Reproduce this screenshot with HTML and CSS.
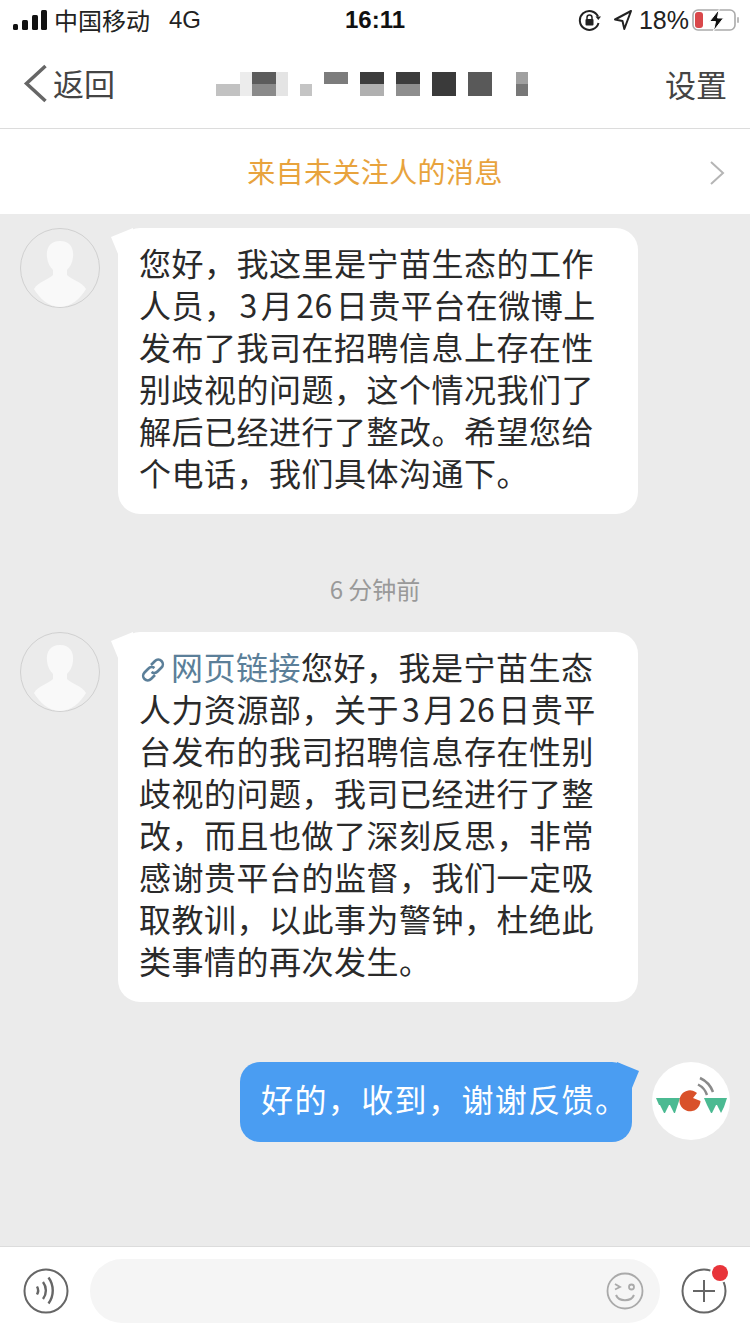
FILE: index.html
```html
<!DOCTYPE html>
<html lang="zh">

<head>
    <meta charset="UTF-8">
    <meta name="viewport" content="width=device-width, initial-scale=1.0">
    <title>私信</title>
    <link rel="stylesheet" href="styles.css">
</head>

<body>
    <div class="page">
        <div class="status-bar">
            <div class="status-left">
                <svg class="signal" width="34" height="22" viewBox="0 0 34 22">
                    <rect x="0" y="15" width="5" height="6" rx="1.5" fill="#111" />
                    <rect x="9" y="11" width="6" height="10" rx="1.5" fill="#111" />
                    <rect x="19" y="6" width="6" height="15" rx="1.5" fill="#111" />
                    <rect x="28" y="1" width="6" height="20" rx="1.5" fill="#111" />
                </svg>
                <span class="carrier">中国移动</span>
                <span class="network">4G</span>
            </div>
            <div class="status-time">16:11</div>
            <div class="status-right">
                <svg width="24" height="24" viewBox="0 0 24 24">
                    <path d="M20 8.5A9.5 9.5 0 1 0 20.5 15" fill="none" stroke="#222" stroke-width="2" />
                    <path d="M17.5 8.5h5.5l-2.7 3.5z" fill="#222" />
                    <rect x="7.5" y="11" width="8" height="6.5" rx="1" fill="#222" />
                    <path d="M9 11V9.5a2.5 2.5 0 0 1 5 0V11" fill="none" stroke="#222" stroke-width="1.5" />
                </svg>
                <svg class="arrow" width="20" height="22" viewBox="0 0 20 22">
                    <path d="M18 2 2 10.5l7.5 1.5 1.8 8z" fill="none" stroke="#222" stroke-width="2" stroke-linejoin="round" />
                </svg>
                <span class="battery-text">18%</span>
                <svg width="48" height="24" viewBox="0 0 48 24">
                    <rect x="1" y="2" width="42" height="20" rx="5" fill="none" stroke="#aaa" stroke-width="1.6" />
                    <rect x="3" y="4" width="8" height="16" rx="3" fill="#d9474a" />
                    <path d="M27 1.5 17.500 13.500h6l-2 9.500 10-13h-6z" fill="#111" stroke="#fff" stroke-width="1" />
                    <rect x="45" y="9" width="2" height="6" rx="1" fill="#bbb" />
                </svg>
            </div>
        </div>

        <div class="nav-bar">
            <div class="nav-back">
                <svg width="26" height="40" viewBox="0 0 26 40">
                    <path d="M22.500 2 3.500 19.500 22.500 37" fill="none" stroke="#666" stroke-width="3.500" />
                </svg>
                <span>返回</span>
            </div>
            <svg class="nav-title" width="312" height="24" viewBox="0 0 312 24">
                <rect x="0" y="12" width="24" height="12" fill="#c2c2c2" />
                <rect x="24" y="0" width="12" height="24" fill="#ececec" />
                <rect x="36" y="0" width="24" height="12" fill="#5c5c5c" />
                <rect x="36" y="12" width="24" height="12" fill="#8a8a8a" />
                <rect x="60" y="0" width="12" height="24" fill="#e4e4e4" />
                <rect x="84" y="12" width="12" height="12" fill="#c4c4c4" />
                <rect x="108" y="0" width="24" height="12" fill="#7c7c7c" />
                <rect x="144" y="0" width="24" height="12" fill="#3c3c3c" />
                <rect x="144" y="12" width="24" height="12" fill="#b0b0b0" />
                <rect x="180" y="0" width="24" height="12" fill="#3c3c3c" />
                <rect x="180" y="12" width="24" height="12" fill="#8e8e8e" />
                <rect x="216" y="0" width="24" height="24" fill="#3a3a3a" />
                <rect x="252" y="0" width="24" height="24" fill="#595959" />
                <rect x="300" y="0" width="12" height="12" fill="#a0a0a0" />
                <rect x="300" y="12" width="12" height="12" fill="#777" />
            </svg>
            <div class="nav-action">设置</div>
        </div>

        <div class="notice">
            <span>来自未关注人的消息</span>
            <svg class="notice-arrow" width="16" height="26" viewBox="0 0 16 26">
                <path d="M2 2 14 13 2 24" fill="none" stroke="#b5b5b5" stroke-width="2" />
            </svg>
        </div>

        <div class="chat">
            <div class="msg">
                <svg class="avatar" width="80" height="80" viewBox="0 0 80 80">
                    <circle cx="40" cy="40" r="39.500" fill="#ebebeb" stroke="#d0d0d0" stroke-width="1" />
                    <path d="M40 13c-10 0-14 7-13 16 .6 6 3 10 6 13v5c-5 5-15 7-19 14 5 9 15 18 26 18s21-9 26-18c-4-7-14-9-19-14v-5c3-3 5.400-7 6-13 1-9-3-16-13-16z" fill="#f9f9f9" />
                </svg>
                <div class="bubble">您好，我这里是宁苗生态的工作<br>人员，<span class="num">3</span>月<span class="num">26</span>日贵平台在微博上<br>发布了我司在招聘信息上存在性<br>别歧视的问题，这个情况我们了<br>解后已经进行了整改。希望您给<br>个电话，我们具体沟通下。</div>
            </div>

            <div class="chat-time">6 分钟前</div>

            <div class="msg">
                <svg class="avatar" width="80" height="80" viewBox="0 0 80 80">
                    <circle cx="40" cy="40" r="39.500" fill="#ebebeb" stroke="#d0d0d0" stroke-width="1" />
                    <path d="M40 13c-10 0-14 7-13 16 .6 6 3 10 6 13v5c-5 5-15 7-19 14 5 9 15 18 26 18s21-9 26-18c-4-7-14-9-19-14v-5c3-3 5.400-7 6-13 1-9-3-16-13-16z" fill="#f9f9f9" />
                </svg>
                <div class="bubble"><svg class="link-icon" width="28" height="28" viewBox="0 0 28 28">
                        <path d="M12 9l4-4a4.500 4.500 0 0 1 6.500 6.500l-4 4a4.500 4.500 0 0 1-6 .5M16 19l-4 4a4.500 4.500 0 0 1-6.500-6.500l4-4a4.500 4.500 0 0 1 6-.5" fill="none" stroke="#5b7f99" stroke-width="2.600" />
                    </svg><span class="link-text">网页链接</span>您好，我是宁苗生态<br>人力资源部，关于<span class="num">3</span>月<span class="num">26</span>日贵平<br>台发布的我司招聘信息存在性别<br>歧视的问题，我司已经进行了整<br>改，而且也做了深刻反思，非常<br>感谢贵平台的监督，我们一定吸<br>取教训，以此事为警钟，杜绝此<br>类事情的再次发生。</div>
            </div>

            <div class="msg msg-self">
                <div class="bubble bubble-self">好的，收到，谢谢反馈。</div>
                <svg class="avatar-self" width="78" height="78" viewBox="0 0 78 78">
                    <circle cx="39" cy="39" r="39" fill="#fff" />
                    <path d="M4 36h24l-5 15h-1l-4-8h-1l-4 8h-1l-4-8h-1zM52 36h23l-3 9-3 6-4-8h-1l-4 8h-1l-4-8z" fill="#4bba92" />
                    <path d="M45 31A10.500 10.500 0 1 0 48.500 39L41 36z" fill="#d9512a" />
                    <path d="M46 22.500A18 18 0 0 1 55 33M48 16A25 25 0 0 1 61 30" fill="none" stroke="#8a8a8a" stroke-width="2.500" />
                </svg>
            </div>
        </div>

        <div class="input-bar">
            <svg width="46" height="46" viewBox="0 0 46 46">
                <circle cx="23" cy="23" r="21.500" fill="none" stroke="#666" stroke-width="2" />
                <path d="M14 18.500a8 8 0 0 1 0 8M20 14a14 14 0 0 1 0 17M25.500 9.500a22 22 0 0 1 0 26" fill="none" stroke="#666" stroke-width="2.400" />
            </svg>
            <div class="input-box">
                <svg width="38" height="38" viewBox="0 0 38 38">
                    <circle cx="19" cy="19" r="17.500" fill="none" stroke="#aaa" stroke-width="1.800" />
                    <path d="M9 12l5 3-5 2.500" fill="none" stroke="#aaa" stroke-width="1.800" />
                    <circle cx="25.500" cy="15" r="2.500" fill="none" stroke="#aaa" stroke-width="1.800" />
                    <path d="M10 23c3 7 15 7 18 0" fill="none" stroke="#aaa" stroke-width="2" />
                </svg>
            </div>
            <div class="plus-btn">
                <svg width="46" height="46" viewBox="0 0 46 46">
                    <circle cx="23" cy="23" r="21.500" fill="none" stroke="#666" stroke-width="2" />
                    <path d="M23 12v22M12 23h22" stroke="#666" stroke-width="2" />
                </svg>
                <span class="red-dot"></span>
            </div>
        </div>
    </div>
</body>

</html>
```

FILE: styles.css
```css
body {
    margin: 0;
    padding: 0;
    font-family: "Noto Sans CJK SC", "Liberation Sans", sans-serif;
    color: #222;
    background-color: #ebebeb;
}

svg {
    display: block;
    flex-shrink: 0;
}

.page {
    display: flex;
    flex-direction: column;
    width: 750px;
    height: 1334px;
    overflow: hidden;
}

.status-bar {
    display: flex;
    align-items: center;
    justify-content: space-between;
    height: 40px;
    padding: 0 13px;
    background-color: #fff;
    position: relative;
}

.status-left {
    display: flex;
    align-items: center;
    gap: 7px;
    font-size: 24px;
    line-height: 38px;
}

.network {
    margin-left: 12px;
    font-family: "Liberation Sans", sans-serif;
}

.status-time {
    position: absolute;
    left: 0;
    right: 0;
    text-align: center;
    font-family: "Liberation Sans", sans-serif;
    font-size: 24px;
    font-weight: bold;
    line-height: 40px;
    color: #111;
}

.status-right {
    display: flex;
    align-items: center;
    gap: 3px;
    margin-right: -3px;
    position: relative;
}

.arrow {
    margin-left: 8px;
}

.battery-text {
    margin-left: 3px;
    font-family: "Liberation Sans", sans-serif;
    font-size: 25px;
    line-height: 40px;
}

.nav-bar {
    display: flex;
    align-items: center;
    justify-content: space-between;
    height: 88px;
    padding: 0 23px;
    background-color: #fff;
    border-bottom: 1px solid #dcdcdc;
    color: #444;
    font-size: 31px;
}

.nav-back {
    display: flex;
    align-items: center;
    gap: 4px;
    line-height: 40px;
}

.nav-back span {
    margin-top: -2px;
}

.nav-title {
    margin: 0 36px 0 0;
}

.nav-action {
    line-height: 40px;
}

.notice {
    display: flex;
    align-items: center;
    justify-content: center;
    height: 83px;
    padding-bottom: 2px;
    background-color: #fff;
    color: #e8a33d;
    font-size: 28px;
    letter-spacing: 0.4px;
    position: relative;
}

.notice-arrow {
    position: absolute;
    right: 25px;
    top: 31px;
}

.chat {
    flex: 1;
    display: flex;
    flex-direction: column;
    padding-top: 14px;
    background-color: #ebebeb;
}

.msg {
    display: flex;
    align-items: flex-start;
    gap: 18px;
    padding-left: 20px;
}

.msg-self {
    justify-content: flex-end;
    gap: 20px;
    margin-top: 60px;
    padding-right: 20px;
}

.bubble {
    position: relative;
    padding: 13px 21px 21px;
    width: 478px;
    background-color: #fff;
    border-radius: 22px;
    font-size: 32px;
    line-height: 42px;
    letter-spacing: 0.5px;
    color: #2a2a2a;
    white-space: nowrap;
}

/* tail on the top corner */
.bubble::before {
    content: "";
    position: absolute;
    top: 0;
    left: -7px;
    width: 22px;
    height: 26px;
    background-color: #fff;
    clip-path: polygon(0 35%, 100% 0, 100% 100%, 32% 100%);
}

.bubble-self {
    width: 350px;
    height: 80px;
    padding: 0 21px;
    line-height: 72px;
    letter-spacing: 1.4px;
    background-color: #4a9df2;
    color: #fff;
    border-radius: 20px;
}

.bubble-self::before {
    left: auto;
    right: -7px;
    background-color: #4a9df2;
    clip-path: polygon(100% 35%, 0 0, 0 100%, 68% 100%);
}

.num {
    margin: 0 3px;
}

.chat-time {
    margin: 57px 0 25px;
    text-align: center;
    font-size: 24px;
    line-height: 36px;
    color: #999;
}

.link-icon {
    display: inline-block;
    vertical-align: -4px;
    margin-right: 4px;
}

.link-text {
    color: #5b7f99;
}

.input-bar {
    display: flex;
    align-items: center;
    height: 87px;
    padding: 0 23px;
    gap: 21px;
    background-color: #fff;
    border-top: 1px solid #dcdcdc;
}

.input-box {
    display: flex;
    align-items: center;
    justify-content: flex-end;
    width: 570px;
    height: 64px;
    padding-right: 16px;
    box-sizing: border-box;
    background-color: #f5f5f5;
    border-radius: 32px;
}

.plus-btn {
    position: relative;
}

.red-dot {
    position: absolute;
    top: -3px;
    right: -1px;
    width: 16px;
    height: 16px;
    background-color: #e8343a;
    border-radius: 50%;
    box-shadow: 0 0 0 2px #fff;
}
```
